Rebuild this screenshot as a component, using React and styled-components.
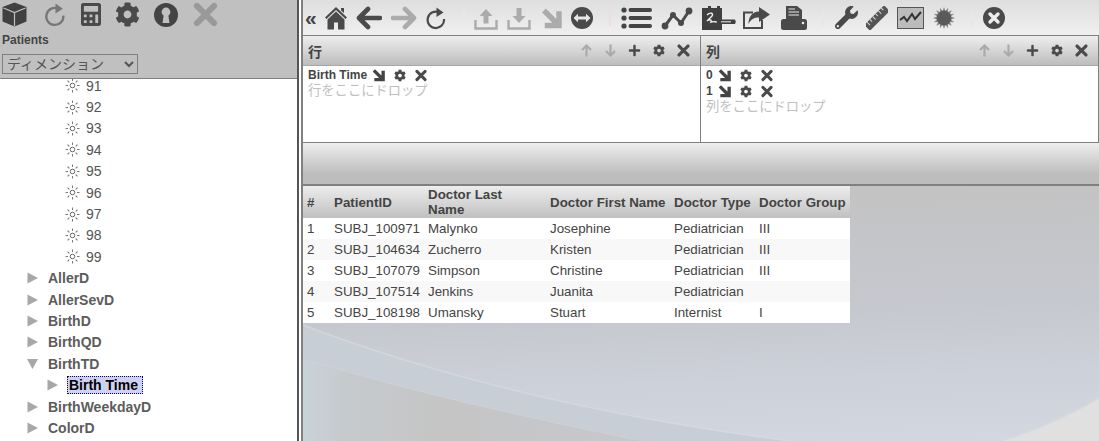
import React from "react";
import styled, { createGlobalStyle } from "styled-components";
import { FaCalculator, FaCog, FaWrench, FaPlus } from "react-icons/fa";

const Global = createGlobalStyle`
  html, body {
    margin: 0;
    padding: 0;
    height: 100%;
    overflow: hidden;
    background: #fff;
  }
  body {
    font-family: "Liberation Sans", "Noto Sans CJK JP", sans-serif;
  }
`;

const Page = styled.div`
  display: flex;
  width: 1099px;
  height: 441px;
  overflow: hidden;
`;

const LeftPane = styled.div`
  width: 297px;
  flex: none;
  display: flex;
  flex-direction: column;
  border-right: 2px solid #555;
  overflow: hidden;
`;

const LeftHeader = styled.div`
  height: 78px;
  flex: none;
  background: #c0c0c0;
  border-bottom: 1px solid #808080;
  position: relative;
  z-index: 1;
`;

const LeftIcons = styled.div`
  display: flex;
  align-items: center;
  height: 29px;
  padding-left: 2px;
  color: #444;
`;

const Slot = styled.span`
  display: inline-flex;
  flex: none;
  align-items: center;
  justify-content: center;
  width: ${(p) => p.$w}px;
  margin-left: ${(p) => p.$l || 0}px;
  color: ${(p) => p.$color || "#4a4a4a"};
  svg {
    display: block;
  }
`;

const PaneTitle = styled.div`
  font-size: 12px;
  font-weight: bold;
  color: #444;
  line-height: 14px;
  padding: 4px 0 0 2px;
`;

const KindSelect = styled.select`
  display: block;
  width: 136px;
  height: 20px;
  margin: 7px 0 0 2px;
  padding: 0;
  border: 1px solid #808080;
  background: transparent;
  color: #555;
  font-size: 14px;
  font-family: "Liberation Sans", "Noto Sans CJK JP", sans-serif;
  border-radius: 0;
  outline: none;
`;

const Tree = styled.div`
  flex: 1;
  margin-top: -4px;
  background: #fff;
`;

const TreeRow = styled.div`
  display: flex;
  align-items: center;
  height: 21.4px;
  padding-left: ${(p) => p.$indent}px;
`;

const Leaf = styled.span`
  font-size: 14px;
  color: #555;
  margin-left: 6px;
`;

const Branch = styled.span`
  font-size: 14px;
  font-weight: bold;
  color: #5c5c5c;
  margin-left: 10px;
`;

const Selected = styled.span`
  box-sizing: border-box;
  height: 18px;
  line-height: 16px;
  margin-left: 9px;
  padding: 0 4px 0 1px;
  font-size: 14px;
  font-weight: bold;
  color: #000;
  background: #d0d0f0;
  border: 1px dotted #000080;
`;

const Main = styled.div`
  flex: 1;
  margin-left: 2px;
  border-left: 2px solid #808080;
  display: flex;
  flex-direction: column;
  min-width: 0;
  position: relative;
  background: linear-gradient(178deg, #c3c3c3 44%, #c6c8cf 70%, #cdd1d9 85%, #d3d7df 100%);
`;

const Toolbar = styled.div`
  height: 35px;
  flex: none;
  display: flex;
  align-items: center;
  background: linear-gradient(#dedede, #f0f0f0);
  border-bottom: 1px solid #808080;
  padding-left: 2px;
  color: #4a4a4a;
`;

const Collapse = styled.span`
  width: 11px;
  flex: none;
  font-size: 21px;
  font-weight: bold;
  line-height: 30px;
  color: #444;
`;

const Sep = styled.span`
  width: 2px;
  height: 17px;
  flex: none;
  margin-left: ${(p) => p.$l}px;
  background: ${(p) => p.$color || "#e4e8e8"};
`;

const DropRow = styled.div`
  display: flex;
  height: 106px;
  flex: none;
  background: #fff;
  border-bottom: 1px solid #808080;
  border-right: 1px solid #808080;
`;

const DropPanel = styled.div`
  width: ${(p) => p.$w}px;
  flex: ${(p) => (p.$w ? "none" : 1)};
  min-width: 0;
  border-left: ${(p) => (p.$divider ? "1px solid #808080" : "none")};
`;

const PanelHead = styled.div`
  height: 30px;
  box-sizing: border-box;
  display: flex;
  align-items: center;
  padding: 0 10px 0 5px;
  background: linear-gradient(#eeeeee, #bdbdbd);
  border-bottom: 1px solid #a8a8a8;
`;

const PanelTitle = styled.span`
  font-size: 14px;
  font-weight: bold;
  color: #444;
  flex: 1;
`;

const PanelTools = styled.div`
  display: flex;
  align-items: center;
  gap: 12px;
`;

const PanelBody = styled.div`
  padding: 1px 5px;
`;

const Member = styled.div`
  display: flex;
  align-items: center;
  height: 16px;
  font-size: 12px;
  font-weight: bold;
  color: #444;
`;

const MemberTools = styled.span`
  display: inline-flex;
  align-items: center;
  gap: 9px;
  margin-left: 5px;
`;

const Hint = styled.div`
  font-size: 13.3px;
  line-height: 16px;
  color: #c0c0c0;
`;

const ResultBar = styled.div`
  height: 41px;
  flex: none;
  background: linear-gradient(#eeeeee, #bdbdbd 75%);
  border-bottom: 2px solid #808080;
`;

const GridTable = styled.table`
  position: relative;
  border-collapse: collapse;
  table-layout: fixed;
  width: 547px;
  font-size: 13.33px;
  color: #444;
`;

const HeadCell = styled.th`
  height: 32px;
  padding: 0 4px;
  font-size: 13.33px;
  line-height: 15px;
  font-weight: bold;
  text-align: left;
  color: #444;
  background: linear-gradient(#ededed, #c0c0c0);
`;

const Row = styled.tr`
  background: ${(p) => (p.$odd ? "#f8f8f8" : "#fff")};
`;

const Cell = styled.td`
  height: 21px;
  padding: 0 4px;
  white-space: nowrap;
`;

const Wave = styled.svg`
  position: absolute;
  left: 0;
  bottom: 0;
  display: block;
`;

const ArrowDownRight = ({ size = 14, color = "currentColor" }) => (
  <svg width={size} height={size} viewBox="0 0 14 14">
    <path
      d="M2 2 L11 11 M12 2.5 V12 H2.5"
      fill="none"
      stroke={color}
      strokeWidth="3.6"
    />
  </svg>
);

const StrokeArrow = ({ dir, w = 26, h = 24, color = "currentColor" }) => (
  <svg width={w} height={h} viewBox="0 0 26 24">
    <path
      d={dir === "left" ? "M24 12 H4 M12 3 L3 12 L12 21" : "M2 12 H22 M14 3 L23 12 L14 21"}
      fill="none"
      stroke={color}
      strokeWidth="4.6"
      strokeLinecap="round"
      strokeLinejoin="round"
    />
  </svg>
);

const Refresh = ({ w = 20, h = 24, color = "currentColor" }) => (
  <svg width={w} height={h} viewBox="0 0 20 24">
    <path d="M13.5 6.5 A8.2 8.2 0 1 0 18 13" fill="none" stroke={color} strokeWidth="2.2" />
    <path d="M10.5 1.5 L17.5 6.5 L10.5 11 Z" fill={color} />
  </svg>
);

const XMark = ({ size = 14, color = "currentColor" }) => (
  <svg width={size} height={size} viewBox="0 0 14 14">
    <path
      d="M2.2 2.2 L11.8 11.8 M11.8 2.2 L2.2 11.8"
      fill="none"
      stroke={color}
      strokeWidth="3.4"
      strokeLinecap="round"
    />
  </svg>
);

const Cube = () => (
  <svg width="25" height="25" viewBox="0 0 25 25">
    <path d="M12.5 0.5 L24.5 5 V19.5 L12.5 24.5 L0.5 19.5 V5 Z" fill="#404040" />
    <path d="M1.5 6 L12.5 10.5 L23.5 6 M12.5 10.5 V24" fill="none" stroke="#c0c0c0" strokeWidth="1.2" />
  </svg>
);

const House = () => (
  <svg width="22" height="24" viewBox="0 0 22 24">
    <path d="M11 1 L22 11.5 L20.5 13 L11 4 L1.5 13 L0 11.5 Z M16 2 H19 V7 L16 4.5 Z" fill="#4a4a4a" />
    <path d="M11 5.5 L19.5 13.5 V23.5 H13 V16.5 H9 V23.5 H2.5 V13.5 Z" fill="#4a4a4a" />
  </svg>
);

const Tray = ({ up, color = "#ababab" }) => (
  <svg width="24" height="24" viewBox="0 0 24 24">
    <path d="M1.5 14 V22.5 H22.5 V14" fill="none" stroke={color} strokeWidth="2.4" />
    <path
      d={
        up
          ? "M12 3 L18.5 10 H14.5 V17.5 H9.5 V10 H5.5 Z"
          : "M9.5 2 H14.5 V10 H18.5 L12 17 L5.5 10 H9.5 Z"
      }
      fill={color}
    />
  </svg>
);

const SwapCircle = () => (
  <svg width="22" height="22" viewBox="0 0 22 22">
    <circle cx="11" cy="11" r="11" fill="#4a4a4a" />
    <path
      d="M2.5 11 L7 6.8 V9.5 H15 V6.8 L19.5 11 L15 15.2 V12.5 H7 V15.2 Z"
      fill="#e8e8e8"
    />
  </svg>
);

const ListIcon = () => (
  <svg width="31" height="24" viewBox="0 0 31 24">
    <circle cx="3" cy="4" r="2.6" fill="#444" />
    <circle cx="3" cy="12" r="2.6" fill="#444" />
    <circle cx="3" cy="20" r="2.6" fill="#444" />
    <path d="M9.5 4 H29 M9.5 12 H29 M9.5 20 H29" stroke="#444" strokeWidth="4" strokeLinecap="round" />
  </svg>
);

const NodeLine = () => (
  <svg width="32" height="24" viewBox="0 0 32 24">
    <path d="M4 20 L12 9 L20 17 L28 5" fill="none" stroke="#4a4a4a" strokeWidth="3" />
    <circle cx="4" cy="20" r="3.4" fill="#4a4a4a" />
    <circle cx="12" cy="9" r="3" fill="#4a4a4a" />
    <circle cx="20" cy="17" r="3" fill="#4a4a4a" />
    <circle cx="28" cy="5" r="3.4" fill="#4a4a4a" />
  </svg>
);

const SignDoc = () => (
  <svg width="36" height="26" viewBox="0 0 36 26">
    <path d="M1 3 H7 V1 H10 V3 H16 V1 H19 V3 H21 V25 H1 Z" fill="#404040" />
    <path d="M6 10 C9 7 13 8 11 11 L6 16 C9 14 11 15 10 17 C13 16 14 17 16 17" fill="none" stroke="#eee" strokeWidth="1.4" />
    <path d="M15 17 L20 14.5 H34 Q35.5 17 34 19 H20 Z" fill="#404040" />
    <path d="M20 16.8 H30" stroke="#eee" strokeWidth="1" />
  </svg>
);

const ShareBox = () => (
  <svg width="28" height="24" viewBox="0 0 28 24">
    <path d="M11 6.5 H2 V22 H20 V14" fill="none" stroke="#4a4a4a" strokeWidth="2" />
    <path d="M17 1 L28 8.5 L17 16 V11.5 C12 11.5 9 13 6.5 18 C6.5 11 10 5.8 17 5.5 Z" fill="#4a4a4a" />
  </svg>
);

const Printer = () => (
  <svg width="26" height="24" viewBox="0 0 26 24">
    <path d="M5 0 H16 L21 4 V13 H5 Z" fill="#4a4a4a" />
    <path d="M7.5 3 H14 M7.5 6 H18 M7.5 9 H18" stroke="#e8e8e8" strokeWidth="1.2" />
    <path d="M2.5 13 H23.5 Q26 13 26 15.5 V21.5 Q26 24 23.5 24 H2.5 Q0 24 0 21.5 V15.5 Q0 13 2.5 13 Z" fill="#4a4a4a" />
    <circle cx="22" cy="17" r="1.3" fill="#e8e8e8" />
  </svg>
);

const Ruler = () => (
  <svg width="22" height="24" viewBox="0 0 22 24">
    <g transform="rotate(-45 11 12)">
      <rect x="-3" y="8" width="28" height="8" fill="#555" />
      <path d="M1 8 V12 M5 8 V11 M9 8 V12 M13 8 V11 M17 8 V12 M21 8 V11" stroke="#ddd" strokeWidth="1" />
    </g>
  </svg>
);

const ChartBox = () => (
  <svg width="27" height="22" viewBox="0 0 27 22">
    <rect x="0.5" y="0.5" width="26" height="21" fill="#bcbcbc" stroke="#555" />
    <path d="M3 13 L7 10 L10 14 L15 7 L18 12 L24 5" fill="none" stroke="#333" strokeWidth="2" />
  </svg>
);

const Burst = () => {
  const rays = Array.from({ length: 16 }, (_, i) => i * 22.5);
  return (
    <svg width="22" height="22" viewBox="0 0 22 22">
      {rays.map((a) => (
        <path key={a} d="M9.6 4 L11 0 L12.4 4 Z" fill="#888" transform={`rotate(${a} 11 11)`} />
      ))}
      <circle cx="11" cy="11" r="7.4" fill="#5a5a5a" />
    </svg>
  );
};

const CloseCircle = () => (
  <svg width="22" height="22" viewBox="0 0 22 22">
    <circle cx="11" cy="11" r="11" fill="#4a4a4a" />
    <path d="M7 7 L15 15 M15 7 L7 15" stroke="#eee" strokeWidth="3.4" strokeLinecap="round" />
  </svg>
);

const Keyhole = () => (
  <svg width="24" height="24" viewBox="0 0 24 24">
    <circle cx="12" cy="12" r="12" fill="#444" />
    <circle cx="12" cy="9" r="4.4" fill="#c0c0c0" />
    <path d="M10 10 H14 L15.5 20 H8.5 Z" fill="#c0c0c0" />
  </svg>
);

const SmallArrow = ({ up, color = "#aaa" }) => (
  <svg width="11" height="13" viewBox="0 0 11 13">
    <path
      d={up ? "M5.5 12.5 V2 M1 6 L5.5 1.5 L10 6" : "M5.5 0.5 V11 M1 7 L5.5 11.5 L10 7"}
      fill="none"
      stroke={color}
      strokeWidth="2.2"
    />
  </svg>
);

const Sun = () => {
  const rays = Array.from({ length: 8 }, (_, i) => i * 45);
  return (
    <svg width="15" height="15" viewBox="0 0 15 15">
      <circle cx="7.5" cy="7.5" r="2.3" fill="none" stroke="#666" strokeWidth="1" />
      {rays.map((a) => (
        <path key={a} d="M7.5 0.5 V3" stroke="#777" strokeWidth="1" transform={`rotate(${a} 7.5 7.5)`} />
      ))}
    </svg>
  );
};

const Caret = ({ open }) => (
  <svg width="11" height="12" viewBox="0 0 11 12">
    <path d={open ? "M0 1 H11 L5.5 11 Z" : "M0.5 0.5 L11 6 L0.5 11.5 Z"} fill="#a8a6a8" />
  </svg>
);

const PanelActions = () => (
  <PanelTools>
    <Slot $w={12}><SmallArrow up /></Slot>
    <Slot $w={12}><SmallArrow /></Slot>
    <Slot $w={13}><FaPlus size={13} /></Slot>
    <Slot $w={12}><FaCog size={13} /></Slot>
    <Slot $w={13}><XMark size={15} /></Slot>
  </PanelTools>
);

const MemberActions = () => (
  <MemberTools>
    <Slot $w={13} $color="#444"><ArrowDownRight size={14} /></Slot>
    <Slot $w={12}><FaCog size={13} /></Slot>
    <Slot $w={12}><XMark size={15} /></Slot>
  </MemberTools>
);

const numbers = [91, 92, 93, 94, 95, 96, 97, 98, 99];
const beforeOpen = ["AllerD", "AllerSevD", "BirthD", "BirthQD"];

const columns = [
  { label: "#", w: 27 },
  { label: "PatientID", w: 94 },
  { label: "Doctor Last Name", w: 122 },
  { label: "Doctor First Name", w: 124 },
  { label: "Doctor Type", w: 85 },
  { label: "Doctor Group", w: 95 },
];

const rows = [
  [1, "SUBJ_100971", "Malynko", "Josephine", "Pediatrician", "III"],
  [2, "SUBJ_104634", "Zucherro", "Kristen", "Pediatrician", "III"],
  [3, "SUBJ_107079", "Simpson", "Christine", "Pediatrician", "III"],
  [4, "SUBJ_107514", "Jenkins", "Juanita", "Pediatrician", ""],
  [5, "SUBJ_108198", "Umansky", "Stuart", "Internist", "I"],
];

const App = () => {
  return (
    <Page>
      <Global />
      <LeftPane>
        <LeftHeader>
          <LeftIcons>
            <Slot $w={25}><Cube /></Slot>
            <Slot $w={22} $l={17} $color="#777"><Refresh w={22} h={25} /></Slot>
            <Slot $w={20} $l={15}><FaCalculator size={25} /></Slot>
            <Slot $w={25} $l={14}><FaCog size={25} /></Slot>
            <Slot $w={24} $l={14}><Keyhole /></Slot>
            <Slot $w={25} $l={15} $color="#999"><XMark size={29} /></Slot>
          </LeftIcons>
          <PaneTitle>Patients</PaneTitle>
          <KindSelect defaultValue="dim">
            <option value="dim">ディメンション</option>
          </KindSelect>
        </LeftHeader>
        <Tree>
          {numbers.map((n) => (
            <TreeRow key={n} $indent={65}>
              <Sun />
              <Leaf>{n}</Leaf>
            </TreeRow>
          ))}
          {beforeOpen.map((name) => (
            <TreeRow key={name} $indent={27}>
              <Caret />
              <Branch>{name}</Branch>
            </TreeRow>
          ))}
          <TreeRow $indent={27}>
            <Caret open />
            <Branch>BirthTD</Branch>
          </TreeRow>
          <TreeRow $indent={47}>
            <Caret />
            <Selected>Birth Time</Selected>
          </TreeRow>
          <TreeRow $indent={27}>
            <Caret />
            <Branch>BirthWeekdayD</Branch>
          </TreeRow>
          <TreeRow $indent={27}>
            <Caret />
            <Branch>ColorD</Branch>
          </TreeRow>
        </Tree>
      </LeftPane>
      <Main>
        <Wave width="796" height="118" viewBox="0 0 796 118">
          <defs>
            <linearGradient id="lowBand" x1="0" x2="1" y1="0" y2="0">
              <stop offset="0" stopColor="#c9d3da" />
              <stop offset="0.12" stopColor="#c6cacd" />
              <stop offset="0.4" stopColor="#c5c5c5" />
              <stop offset="1" stopColor="#c6c8cd" />
            </linearGradient>
          </defs>
          <path d="M0 2 C110 44 270 90 487 118 L0 118 Z" fill="#c8ced6" />
          <path d="M0 36 C100 66 210 92 340 118 L0 118 Z" fill="url(#lowBand)" />
          <path d="M0 2 C110 44 270 90 487 118" fill="none" stroke="#d6e0e6" strokeOpacity="0.6" strokeWidth="1.5" />
          <path d="M0 36 C100 66 210 92 340 118" fill="none" stroke="#d2d6da" strokeOpacity="0.6" strokeWidth="1" />
          <path d="M796 75 C770 90 740 105 697 118 L796 118 Z" fill="#e0e0e0" />
          <path d="M796 75 C770 90 740 105 697 118" fill="none" stroke="#d2dade" strokeWidth="2" />
        </Wave>
        <Toolbar>
          <Collapse>«</Collapse>
          <Slot $w={22} $l={9}><House /></Slot>
          <Slot $w={26} $l={9}><StrokeArrow dir="left" /></Slot>
          <Slot $w={26} $l={9} $color="#ababab"><StrokeArrow dir="right" /></Slot>
          <Slot $w={20} $l={9}><Refresh /></Slot>
          <Sep $l={17} />
          <Slot $w={24} $l={9}><Tray up /></Slot>
          <Slot $w={24} $l={9}><Tray /></Slot>
          <Slot $w={21} $l={10} $color="#ababab"><ArrowDownRight size={24} /></Slot>
          <Slot $w={22} $l={9}><SwapCircle /></Slot>
          <Sep $l={16} $color="#eddede" />
          <Slot $w={31} $l={10}><ListIcon /></Slot>
          <Slot $w={32} $l={9}><NodeLine /></Slot>
          <Slot $w={36} $l={8}><SignDoc /></Slot>
          <Slot $w={28} $l={5}><ShareBox /></Slot>
          <Slot $w={26} $l={11}><Printer /></Slot>
          <Sep $l={15} />
          <Slot $w={23} $l={11}><FaWrench size={23} /></Slot>
          <Slot $w={22} $l={8}><Ruler /></Slot>
          <Slot $w={27} $l={9}><ChartBox /></Slot>
          <Slot $w={22} $l={9}><Burst /></Slot>
          <Sep $l={16} />
          <Slot $w={22} $l={10}><CloseCircle /></Slot>
        </Toolbar>
        <DropRow>
          <DropPanel $w={397}>
            <PanelHead>
              <PanelTitle>行</PanelTitle>
              <PanelActions />
            </PanelHead>
            <PanelBody>
              <Member>
                Birth Time
                <MemberActions />
              </Member>
              <Hint>行をここにドロップ</Hint>
            </PanelBody>
          </DropPanel>
          <DropPanel $divider>
            <PanelHead>
              <PanelTitle>列</PanelTitle>
              <PanelActions />
            </PanelHead>
            <PanelBody>
              <Member>
                0
                <MemberActions />
              </Member>
              <Member>
                1
                <MemberActions />
              </Member>
              <Hint>列をここにドロップ</Hint>
            </PanelBody>
          </DropPanel>
        </DropRow>
        <ResultBar />
        <GridTable>
          <colgroup>
            {columns.map((c) => (
              <col key={c.label} width={c.w} />
            ))}
          </colgroup>
          <thead>
            <tr>
              {columns.map((c) => (
                <HeadCell key={c.label}>{c.label}</HeadCell>
              ))}
            </tr>
          </thead>
          <tbody>
            {rows.map((r, i) => (
              <Row key={r[0]} $odd={i % 2 === 1}>
                {r.map((v, j) => (
                  <Cell key={j}>{v}</Cell>
                ))}
              </Row>
            ))}
          </tbody>
        </GridTable>
      </Main>
    </Page>
  );
};

export default App;
